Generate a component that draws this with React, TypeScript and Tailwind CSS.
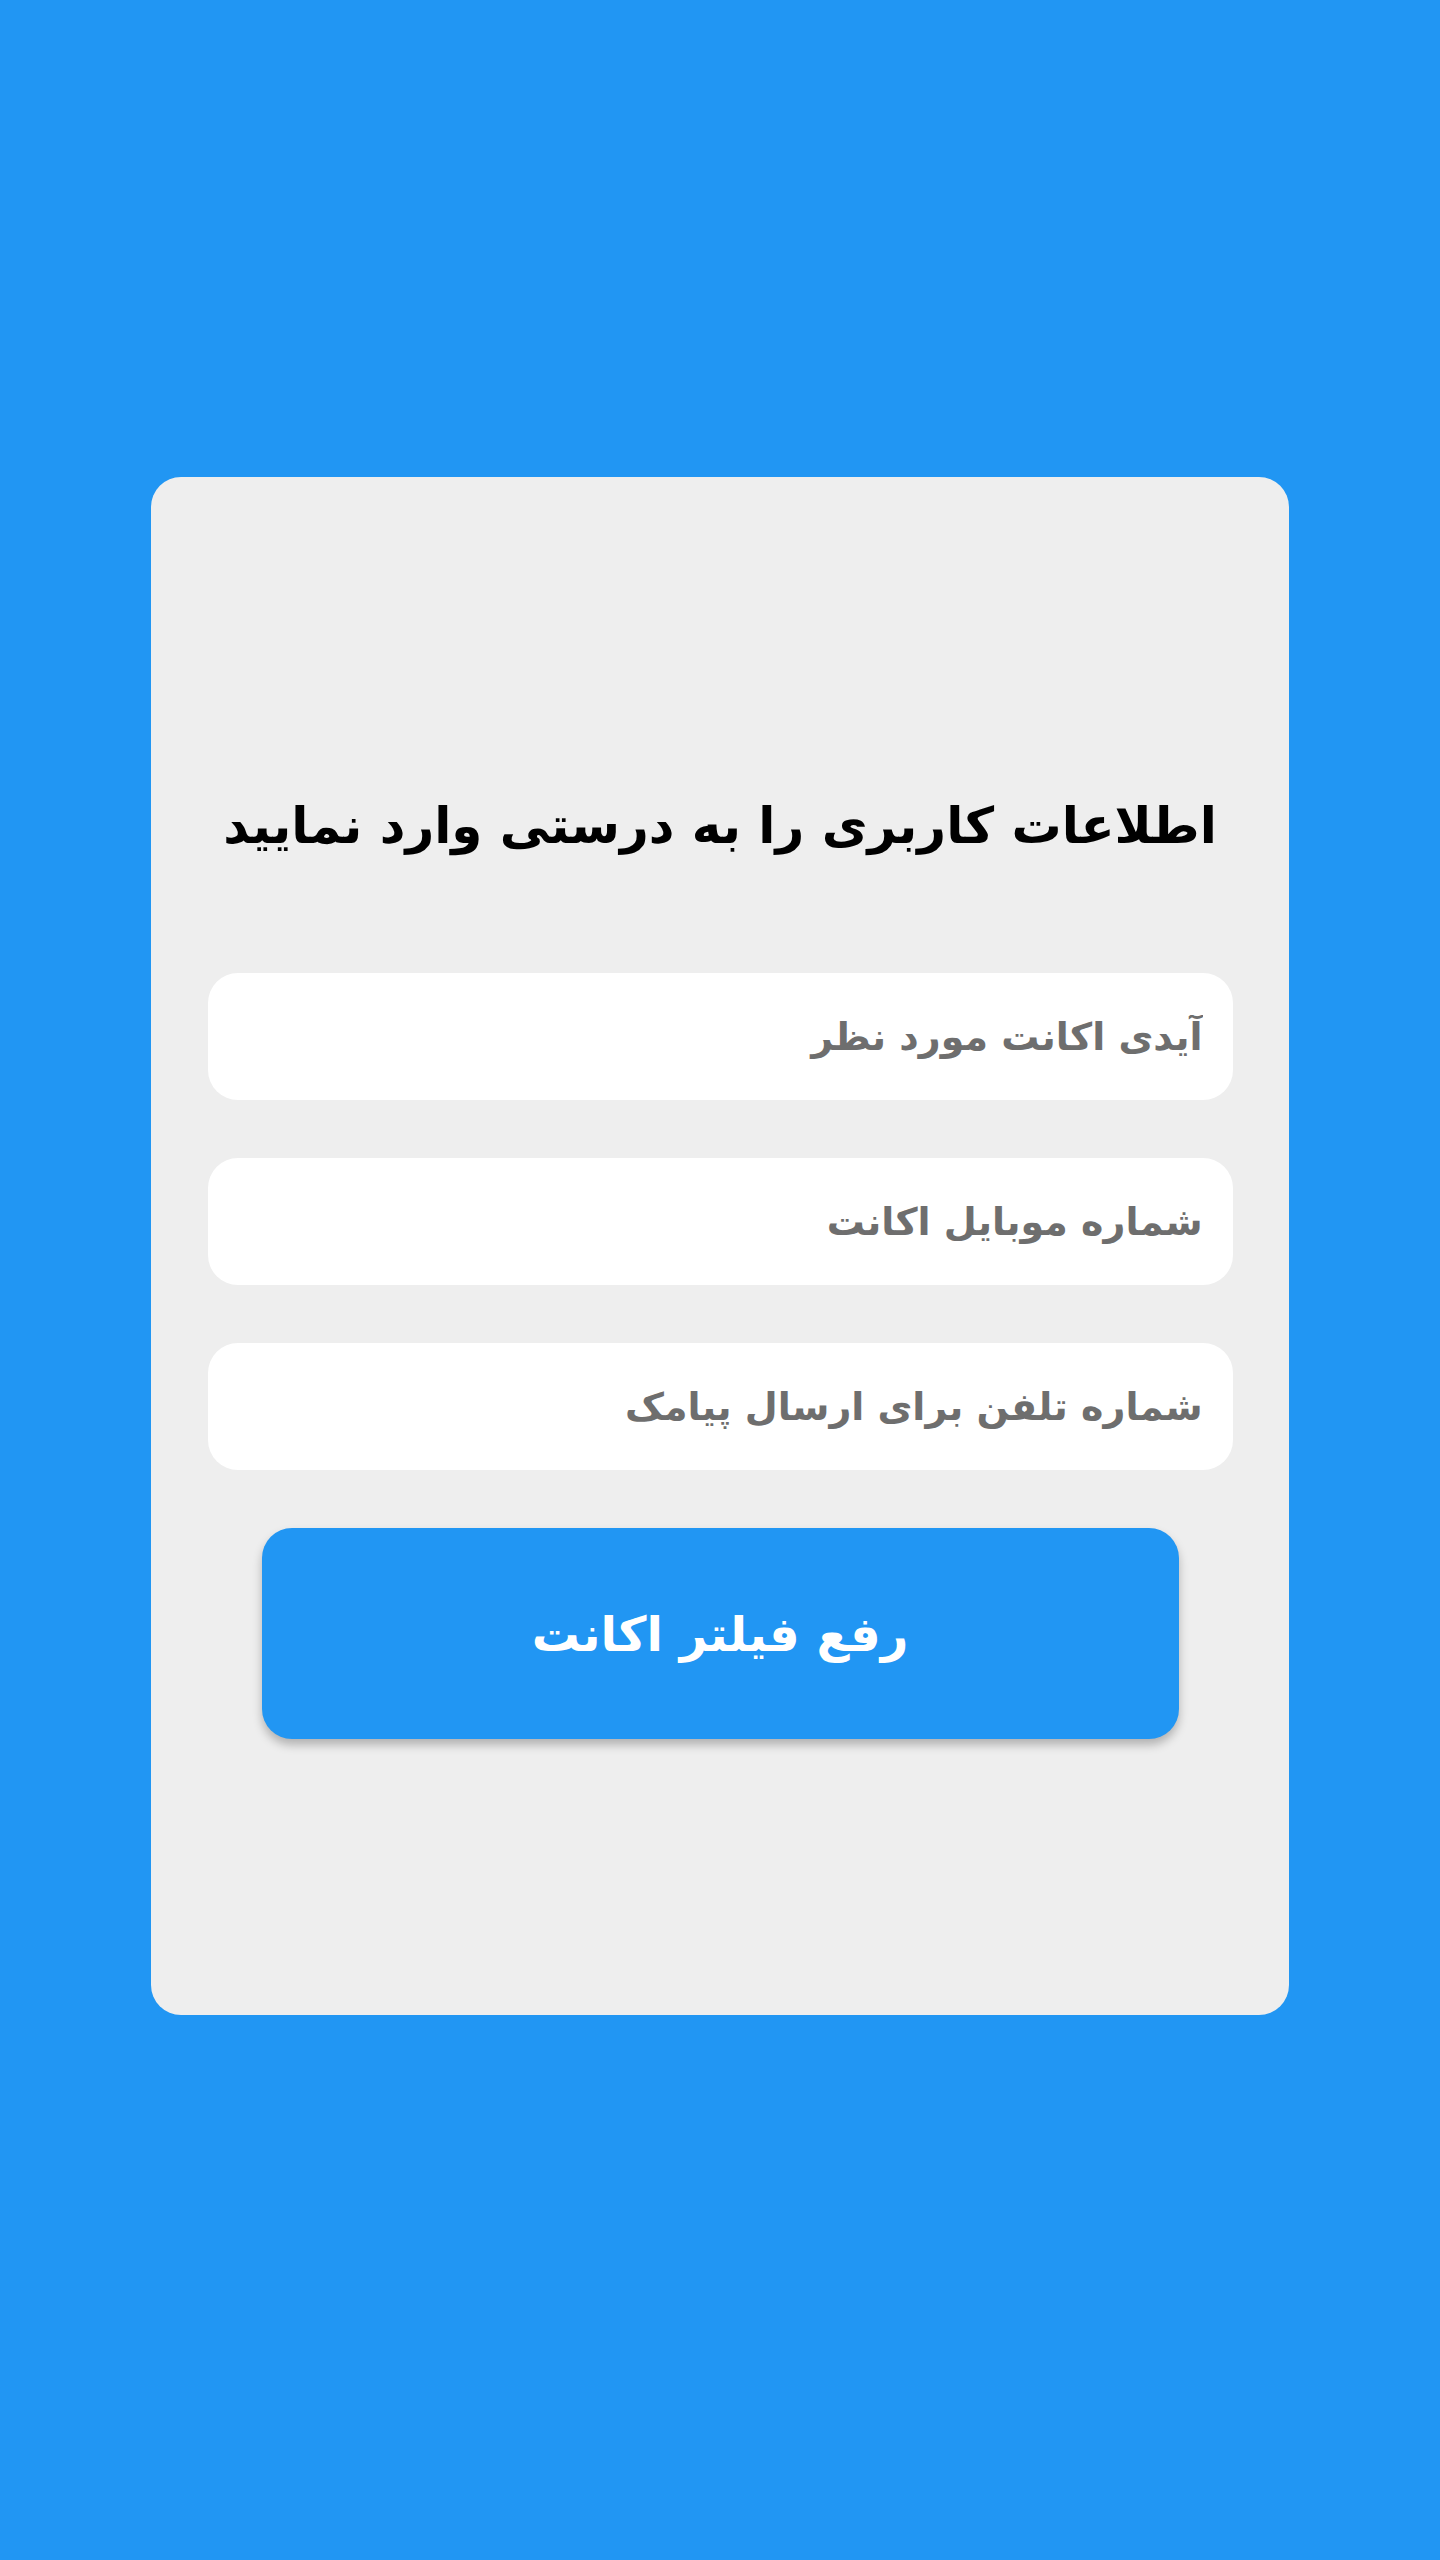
export default function App() {
  const fields = [
    "آیدی اکانت مورد نظر",
    "شماره موبایل اکانت",
    "شماره تلفن برای ارسال پیامک",
  ];

  return (
    <div
      dir="rtl"
      className="min-h-[2560px] w-full bg-[#2196f3] pt-[477px]"
      style={{ fontFamily: '"DejaVu Sans", "Noto Sans", sans-serif' }}
    >
      <div className="mx-auto flex h-[1538px] w-[1138px] flex-col items-center rounded-[30px] bg-[#eeeeee] pt-[309px]">
        {/* Title */}
        <h1 className="text-[50px] font-bold leading-[80px] text-black">
          اطلاعات کاربری را به درستی وارد نمایید
        </h1>

        {/* Fields */}
        <div className="mt-[107px] flex flex-col gap-[58px]">
          {fields.map((f) => (
            <input
              key={f}
              type="text"
              placeholder={f}
              className="h-[127px] w-[1025px] rounded-[30px] bg-white pr-[30px] pl-[30px] text-right text-[38px] font-semibold text-[#444] outline-none placeholder:text-[#6e6e6e]"
            />
          ))}
        </div>

        {/* Submit */}
        <button className="mt-[58px] h-[211px] w-[917px] rounded-[30px] bg-[#2196f3] text-[48px] font-bold text-white shadow-[0_6px_10px_rgba(0,0,0,0.25)]">
          رفع فیلتر اکانت
        </button>
      </div>
    </div>
  );
}
